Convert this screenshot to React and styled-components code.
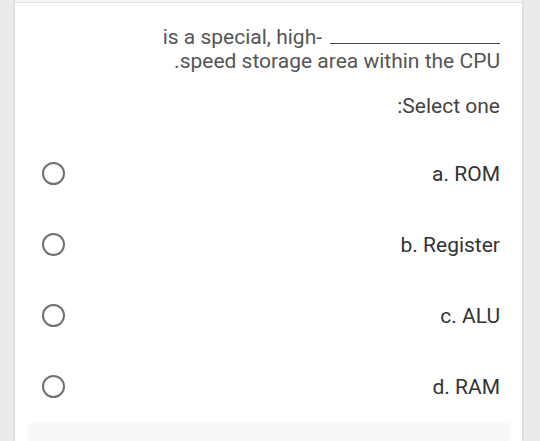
import styled, { createGlobalStyle } from "styled-components";

const GlobalStyle = createGlobalStyle`
  html, body {
    margin: 0;
    padding: 0;
    background: #ebebeb;
    font-family: Roboto, "Liberation Sans", sans-serif;
    overflow: hidden;
  }
`;

const Page = styled.div`
  height: 441px;
  padding-left: 15px;
  width: 507px;
`;

const Card = styled.div`
  background: #fff;
  height: 100%;
  box-shadow: 0 0 3px rgba(0, 0, 0, 0.18);
  display: flex;
  flex-direction: column;
`;

const TopStrip = styled.div`
  height: 4px;
  background: #f4f4f4;
  border-bottom: 1px solid #e0e0e0;
`;

const Body = styled.div`
  padding: 22px 22px 0 27px;
  display: flex;
  flex-direction: column;
`;

const Question = styled.div`
  text-align: right;
  font-size: 21px;
  line-height: 24px;
  color: #555;
`;

const Blank = styled.span`
  display: inline-block;
  width: 170px;
  border-bottom: 1px solid #444;
  margin-left: 8px;
  vertical-align: baseline;
`;

const Prompt = styled.div`
  margin-top: 21px;
  text-align: right;
  font-size: 21px;
  line-height: 24px;
  color: #444;
`;

const Options = styled.div`
  margin-top: 21px;
  display: flex;
  flex-direction: column;
`;

const Option = styled.label`
  height: 71px;
  display: flex;
  align-items: center;
  justify-content: space-between;
`;

const Radio = styled.span`
  width: 19px;
  height: 19px;
  border: 2px solid #707070;
  border-radius: 50%;
  margin-bottom: 1px;
`;

const OptionText = styled.span`
  font-size: 21px;
  line-height: 24px;
  color: #333;
`;

const Footer = styled.div`
  margin: 1px 13px 0 14px;
  height: 40px;
  background: #f8f8f8;
  box-shadow: 0 0 3px rgba(0, 0, 0, 0.08);
`;

const answers = ["a. ROM", "b. Register", "c. ALU", "d. RAM"];

const App = () => {
  return (
    <>
      <GlobalStyle />
      <Page>
        <Card>
          <TopStrip />
          <Body>
            <Question>
              <div>
                is a special, high-
                <Blank />
              </div>
              <div>.speed storage area within the CPU</div>
            </Question>
            <Prompt>:Select one</Prompt>
            <Options>
              {answers.map((a) => (
                <Option key={a}>
                  <Radio />
                  <OptionText>{a}</OptionText>
                </Option>
              ))}
            </Options>
          </Body>
          <Footer />
        </Card>
      </Page>
    </>
  );
};

export default App;
